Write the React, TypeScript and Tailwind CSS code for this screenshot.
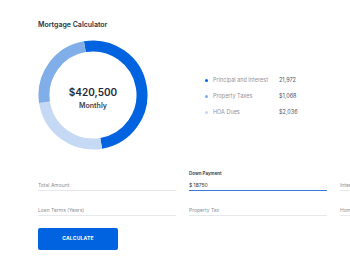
import React from "react"

const segments = [
  { from: -9.6, to: 170.4, color: "#0263e0" },
  { from: 170.4, to: 261.5, color: "#c6d9f4" },
  { from: 261.5, to: 350.4, color: "#80aee9" },
]

function arc(cx: number, cy: number, r: number, a0: number, a1: number) {
  const p = (a: number) => {
    const rad = ((a - 90) * Math.PI) / 180
    return [cx + r * Math.cos(rad), cy + r * Math.sin(rad)]
  }
  const [x0, y0] = p(a0)
  const [x1, y1] = p(a1)
  const large = a1 - a0 > 180 ? 1 : 0
  return `M ${x0} ${y0} A ${r} ${r} 0 ${large} 1 ${x1} ${y1}`
}

const legend = [
  { label: "Principal and Interest", value: "21,972", color: "bg-[#0263e0]" },
  { label: "Property Taxes", value: "$1,068", color: "bg-[#80aee9]" },
  { label: "HOA Dues", value: "$2,036", color: "bg-[#c6d9f4]" },
]

function Field({ label, value, placeholder }: { label?: string; value?: string; placeholder: string }) {
  const active = !!label
  return (
    <div className="flex flex-col">
      {label && <div className="mb-[2px] h-[6px] text-[4.5px] leading-[6px] font-semibold text-[#2a3342]">{label}</div>}
      <div
        className={
          "h-[12px] pt-[2px] text-[5px] leading-[8px] whitespace-nowrap " +
          (active ? "border-b-[1.5px] border-[#3b7bd8] text-[#2a3342]" : "border-b border-[#e6e8eb] text-[#8a9099]")
        }
      >
        {value ?? placeholder}
      </div>
    </div>
  )
}

export default function App() {
  return (
    <div className="h-[270px] w-[350px] overflow-hidden bg-white pl-[38px] pt-[20px] font-['Inter',sans-serif]">
      <h1 className="text-[7px] leading-[10px] font-semibold text-[#2b3445]">Mortgage Calculator</h1>

      <div className="mt-[10px] flex items-center">
        <div className="relative h-[110px] w-[110px] shrink-0">
          <svg viewBox="0 0 110 110" className="h-[110px] w-[110px]">
            {segments.map((s) => (
              <path key={s.color} d={arc(55, 55, 49, s.from, s.to)} fill="none" stroke={s.color} strokeWidth={11} />
            ))}
          </svg>
          <div className="absolute inset-0 flex flex-col items-center justify-center pt-[5px]">
            <div className="text-[10px] leading-[12px] font-semibold text-[#1f2937]">$420,500</div>
            <div className="mt-[4px] text-[7px] leading-[8px] font-semibold text-[#3a4352]">Monthly</div>
          </div>
        </div>

        <div className="ml-[57px] flex flex-col gap-[10px] pt-[2px]">
          {legend.map((l) => (
            <div key={l.label} className="flex items-center text-[5.5px] leading-[6px]">
              <span className={"mr-[5px] h-[3px] w-[3px] rounded-full " + l.color} />
              <span className="w-[66px] text-[#8f949b]">{l.label}</span>
              <span className="text-[#4a5260]">{l.value}</span>
            </div>
          ))}
        </div>
      </div>

      <div className="mt-[21px] grid w-[430px] grid-cols-[138px_138px_138px] items-end gap-x-[13px] gap-y-[13px]">
        <Field placeholder="Total Amount" />
        <Field label="Down Payment" value="$ 18750" placeholder="" />
        <Field placeholder="Interest Rate" />
        <Field placeholder="Loan Terms (Years)" />
        <Field placeholder="Property Tax" />
        <Field placeholder="Home Insurance" />
      </div>

      <button className="mt-[12px] flex h-[22px] w-[80px] items-center justify-center rounded-[2px] bg-[#0263e0] text-[5px] font-bold tracking-[0.2px] text-white">
        CALCULATE
      </button>
    </div>
  )
}
